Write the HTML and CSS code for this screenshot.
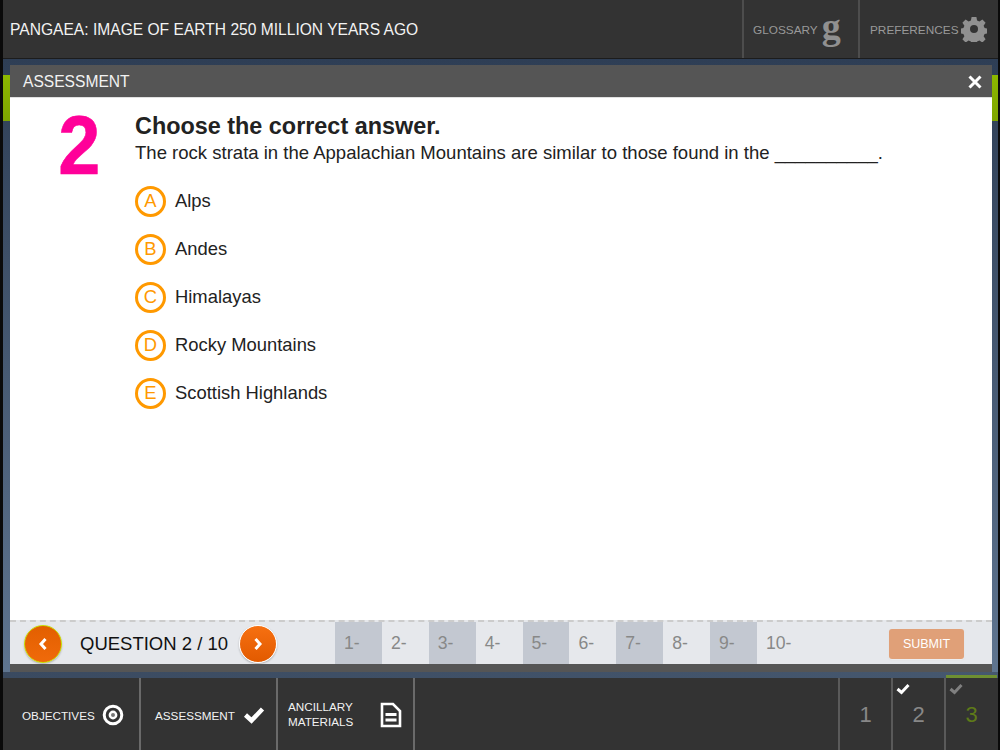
FILE: index.html
```html
<!DOCTYPE html>
<html lang="en">
<head>
<meta charset="utf-8">
<title>Assessment</title>
<link rel="stylesheet" href="styles.css">
</head>
<body>
<div class="screen">
  <header class="topbar">
    <h1 class="title">PANGAEA: IMAGE OF EARTH 250 MILLION YEARS AGO</h1>
    <div class="toplink glossary"><span>GLOSSARY</span><span class="g-icon">g</span></div>
    <div class="toplink prefs"><span>PREFERENCES</span>
      <svg class="gear" viewBox="0 0 26 26" width="26" height="26"><path fill="#909090" fill-rule="evenodd" d="M10.600 1h4.800l.7 3.500 2.300 1 3-2 3.200 3.200-2 3 1 2.300 3.400.7v4.600l-3.400.7-1 2.300 2 3-3.200 3.200-3-2-2.300 1-.7 3.400h-4.800l-.7-3.400-2.300-1-3 2-3.200-3.200 2-3-1-2.300-3.400-.7v-4.600l3.400-.7 1-2.300-2-3 3.200-3.200 3 2 2.300-1zM13 9a4 4 0 1 0 0 8 4 4 0 0 0 0-8z"/></svg>
    </div>
  </header>
  <main class="stage">
    <span class="tab-green left"></span>
    <span class="tab-green right"></span>
    <section class="panel">
      <div class="panel-head">
        <h2 class="panel-title">ASSESSMENT</h2>
        <svg class="close" viewBox="0 0 14 14" width="14" height="14"><path d="M1.500 1.500l11 11M12.500 1.500l-11 11" stroke="#fff" stroke-width="3" fill="none"/></svg>
      </div>
      <div class="panel-body">
        <div class="qnum">2</div>
        <div class="qcontent">
          <h3 class="qhead">Choose the correct answer.</h3>
          <p class="qtext">The rock strata in the Appalachian Mountains are similar to those found in the __________.</p>
          <ul class="options">
            <li class="option"><span class="letter">A</span>Alps</li>
            <li class="option"><span class="letter">B</span>Andes</li>
            <li class="option"><span class="letter">C</span>Himalayas</li>
            <li class="option"><span class="letter">D</span>Rocky Mountains</li>
            <li class="option"><span class="letter">E</span>Scottish Highlands</li>
          </ul>
        </div>
      </div>
      <div class="panel-foot">
        <button class="nav prev"><svg viewBox="0 0 10 14" width="10" height="14"><path d="M7.500 2L3 7l4.500 5" stroke="#fff" stroke-width="3" fill="none"/></svg></button>
        <span class="qcount">QUESTION 2 / 10</span>
        <button class="nav next"><svg viewBox="0 0 10 14" width="10" height="14"><path d="M2.500 2L7 7l-4.500 5" stroke="#fff" stroke-width="3" fill="none"/></svg></button>
        <div class="pager">
          <span class="page alt">1-</span><span class="page">2-</span><span class="page alt">3-</span><span class="page">4-</span><span class="page alt">5-</span><span class="page">6-</span><span class="page alt">7-</span><span class="page">8-</span><span class="page alt">9-</span><span class="page">10-</span>
        </div>
        <button class="submit">SUBMIT</button>
      </div>
      <div class="panel-base"></div>
    </section>
  </main>
  <footer class="bottombar">
    <div class="btab objectives"><span>OBJECTIVES</span>
      <svg viewBox="0 0 22 22" width="22" height="22"><circle cx="11" cy="11" r="8.800" fill="none" stroke="#fff" stroke-width="3"/><circle cx="11" cy="11" r="3.200" fill="#777" stroke="#fff" stroke-width="2.400"/></svg>
    </div>
    <div class="btab assessment"><span>ASSESSMENT</span>
      <svg viewBox="0 0 22 18" width="22" height="18"><path d="M2.500 9l6 5.500L19.500 3" fill="none" stroke="#fff" stroke-width="4.500"/></svg>
    </div>
    <div class="btab ancillary"><span>ANCILLARY<br>MATERIALS</span>
      <svg viewBox="0 0 22 26" width="22" height="26"><path d="M2 2h11l7 7v15H2z" fill="none" stroke="#fff" stroke-width="2.600"/><path d="M5.500 12.500h11M5.500 18h11" stroke="#fff" stroke-width="3"/></svg>
    </div>
    <div class="steps">
      <div class="step">1</div>
      <div class="step">2<svg class="tick" viewBox="0 0 14 12" width="14" height="12"><path d="M1.500 6l4 3.500L12.500 2" fill="none" stroke="#fff" stroke-width="3"/></svg></div>
      <div class="step current">3<svg class="tick" viewBox="0 0 14 12" width="14" height="12"><path d="M1.500 6l4 3.500L12.500 2" fill="none" stroke="#808080" stroke-width="3"/></svg></div>
    </div>
  </footer>
</div>
</body>
</html>
```
FILE: styles.css
```css
* { box-sizing: border-box; }
html, body { margin: 0; padding: 0; }
body {
  width: 1000px;
  height: 750px;
  overflow: hidden;
  background: #0a0a0a;
  font-family: "Liberation Sans", Arial, sans-serif;
}
h1, h2, h3, p, ul { margin: 0; padding: 0; font-weight: normal; }
button { font-family: inherit; padding: 0; }
.screen {
  margin-left: 3px;
  width: 995px;
  height: 750px;
  display: flex;
  flex-direction: column;
}
.topbar {
  flex: 0 0 59px;
  display: flex;
  align-items: stretch;
  background: #333;
  border-bottom: 1px solid #1c1c1c;
}
.title {
  flex: 1;
  padding: 2px 0 0 7px;
  font-size: 15.600px;
  line-height: 56px;
  color: #f2f2f2;
}
.toplink {
  display: flex;
  align-items: center;
  border-left: 2px solid #4d4d4d;
  color: #999;
  font-size: 11.800px;
}
.glossary { width: 116px; padding-left: 9px; gap: 4px; padding-top: 2px; }
.prefs { width: 140px; padding-left: 10px; gap: 2px; padding-top: 2px; }
.g-icon {
  font-family: "Liberation Serif", serif;
  font-weight: bold;
  font-size: 38px;
  line-height: 30px;
  height: 38px;
  color: #909090;
}
.gear { margin-top: -2px; }
.stage {
  position: relative;
  flex: 1;
  min-height: 0;
  padding: 6px 6px 6px 7px;
  background: linear-gradient(#2e3e55, #5f7590);
}
.stage::after {
  content: "";
  position: absolute;
  left: 0;
  right: 0;
  bottom: 0;
  height: 6px;
  background: linear-gradient(90deg, #3a4a60, #46586f);
}
.tab-green {
  position: absolute;
  top: 16px;
  width: 7px;
  height: 46px;
  background: linear-gradient(#8cb800, #7fa500);
}
.tab-green.left { left: 0; }
.tab-green.right { right: 0; width: 6px; }
.panel {
  position: relative;
  height: 100%;
  display: flex;
  flex-direction: column;
}
.panel-head {
  flex: 0 0 33px;
  display: flex;
  align-items: center;
  justify-content: space-between;
  padding: 1px 10px 0 13px;
  background: #555;
  border-bottom: 1px solid #e0e0e0;
}
.panel-title { font-size: 15.600px; color: #f2f2f2; }
.panel-body {
  flex: 1;
  min-height: 0;
  display: flex;
  background: #fff;
}
.qnum {
  width: 125px;
  padding: 5px 0 0 48px;
  font-size: 84px;
  line-height: 84px;
  font-weight: bold;
  color: #ff0099;
  transform: scaleX(.9);
  transform-origin: 50px 0;
  -webkit-text-stroke: .6px #ff0099;
}
.qcontent { flex: 1; padding-top: 15px; }
.qhead {
  font-size: 23.400px;
  line-height: 26px;
  font-weight: bold;
  color: #222;
}
.qtext {
  font-size: 18.540px;
  line-height: 27px;
  color: #222;
}
.options { list-style: none; margin-top: 11px; }
.option {
  display: flex;
  align-items: center;
  gap: 9px;
  height: 48px;
  font-size: 18.400px;
  color: #222;
}
.letter {
  flex: 0 0 31px;
  height: 31px;
  display: flex;
  align-items: center;
  justify-content: center;
  border: 3px solid #ff9900;
  border-radius: 50%;
  color: #ff9900;
  font-size: 18.400px;
}
.panel-foot {
  flex: 0 0 44px;
  min-height: 0;
  display: flex;
  align-items: flex-start;
  background: #e6e8ec;
  border-top: 2px dashed #ccc;
}
.nav {
  flex: 0 0 38px;
  height: 38px;
  margin-top: 3px;
  border-radius: 50%;
  display: flex;
  align-items: center;
  justify-content: center;
  background: linear-gradient(#f67011, #e25a00);
  border: 1px solid #fff;
  box-shadow: 0 1px 2px rgba(0,0,0,.25);
}
.prev { margin-left: 14px; border-color: #c8dc00; background: linear-gradient(#e25f00, #f06a0a); }
.qcount {
  width: 177px;
  padding-left: 18px;
  font-size: 18.500px;
  line-height: 44px;
  color: #111;
  white-space: nowrap;
}
.pager { display: flex; margin-left: 58px; }
.page {
  width: 46.875px;
  height: 42px;
  padding-left: 9px;
  font-size: 17.600px;
  line-height: 42px;
  color: #888;
}
.page.alt { background: #c3c8d1; }
.submit {
  width: 75px;
  height: 30px;
  margin: 7px 28px 0 auto;
  border: 0;
  border-radius: 3px;
  background: #e0a078;
  color: #fff;
  font-size: 12.500px;
  box-shadow: 0 1px 2px rgba(255,255,255,.8), 0 1px 2px rgba(0,0,0,.12);
}
.panel-base { flex: 0 0 8px; background: #555; }
.bottombar {
  flex: 0 0 72px;
  display: flex;
  align-items: stretch;
  background: #333;
  color: #f2f2f2;
  font-size: 11.700px;
}
.btab {
  display: flex;
  align-items: center;
  padding-top: 3px;
  border-right: 2px solid #6a6a6a;
}
.btab svg { margin-top: -1px; }
.objectives { width: 138px; padding-left: 19px; gap: 7px; }
.assessment { width: 137px; padding-left: 14px; gap: 8px; }
.ancillary { width: 137px; padding: 0 0 0 10px; gap: 27px; line-height: 15px; }
.ancillary svg { margin-top: 1px; }
.steps { display: flex; margin-left: auto; margin-right: 1px; }
.step {
  position: relative;
  width: 53px;
  padding-top: 2px;
  border-left: 2px solid #5a5a5a;
  font-size: 22px;
  line-height: 70px;
  text-align: center;
  color: #888;
}
.step.current { color: #5e7a18; }
.step.current::before {
  content: "";
  position: absolute;
  left: 0;
  right: 0;
  top: -3px;
  height: 3px;
  background: #6e8f32;
}
.tick { position: absolute; left: 3px; top: 5px; }
```
